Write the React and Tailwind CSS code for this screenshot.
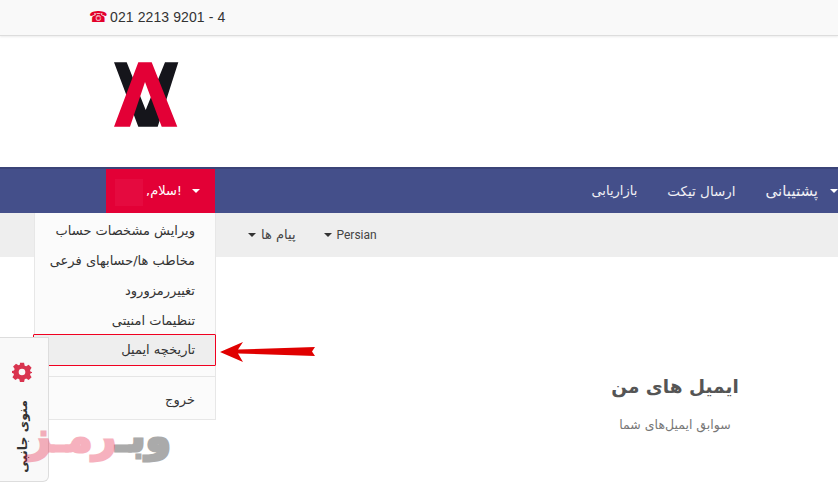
import React from "react";

const Caret = ({ className = "" }) => (
  <span className={"inline-block w-0 h-0 border-x-[4px] border-x-transparent border-t-[4px] " + className} />
);

const Item = ({ children, active }) => (
  <div className={active
    ? "h-[32px] -mt-[2px] -ml-[2px] -mr-[1px] pl-[21px] pr-[20px] flex items-center justify-end bg-[#eeeeee] border border-[#f00020] text-[#333] rounded-[1px] whitespace-nowrap"
    : "h-[30px] px-[20px] flex items-center justify-end text-[#333] whitespace-nowrap"}>
    <span dir="rtl">{children}</span>
  </div>
);

export default function App() {
  return (
    <div className="relative h-[484px] w-[838px] overflow-hidden bg-white text-[13px] font-['Roboto','DejaVu_Sans',sans-serif]">
      <header className="h-[36px] bg-[#f9f9f9] border-b border-[#dddddd] shadow-[0_1px_2px_rgba(0,0,0,0.08)] flex items-center pl-[89px] text-[14px] text-[#333]">
        <span className="text-[#e3002b] text-[15px] w-[21px] leading-none font-['DejaVu_Sans']">☎</span>
        <span className="font-['Liberation_Sans'] tracking-[0.1px]">021 2213 9201 - 4</span>
      </header>

      <div className="h-[131px] pl-[113px] pt-[26px]">
        <svg width="66" height="66" viewBox="0 0 66 66">
          <path d="M1 0.3H13.7L32.7 48L52 0.3H65.3L44.7 64.7H25.3Z" fill="#15151b" />
          <path d="M25.3 0.3H38.7L64.3 64.7H48.7L32 20L17 64.7H1Z" fill="#e30036" />
        </svg>
      </div>

      <nav className="h-[46px] bg-[#444f8a] border-t-2 border-[#3a4478] flex items-stretch text-white text-[13px] font-['DejaVu_Sans',sans-serif]">
        <div className="ml-[106px] w-[109px] bg-[#e30036] flex items-center pl-[9px]">
          <div className="w-[28px] h-[27px] bg-[#e50a3f] mt-[2px]" />
          <span dir="rtl" className="ml-[3px] text-[13px]">!سلام,</span>
          <Caret className="ml-[10px] border-t-white" />
        </div>
        <div className="ml-auto flex items-center text-[#f0f0f5]">
          <span className="mr-[30px]" dir="rtl">بازاریابی</span>
          <span className="mr-[30px] text-[13.5px]" dir="rtl">ارسال تیکت</span>
          <span className="mr-[12px] text-[15px]" dir="rtl">پشتیبانی</span>
          <Caret className="border-t-white" />
        </div>
      </nav>

      <div className="h-[44px] bg-[#eeeeee] flex items-center pl-[248px] text-[#444] text-[12px]">
        <Caret className="border-t-[#333] mr-[5px]" />
        <span dir="rtl" className="font-['DejaVu_Sans'] text-[13px]">پیام ها</span>
        <Caret className="ml-[28px] mr-[5px] border-t-[#333]" />
        <span className="font-['Roboto']">Persian</span>
      </div>

      <main className="flex justify-end pt-[117px]">
        <div className="w-[326px] flex flex-col items-center font-['DejaVu_Sans',sans-serif]" dir="rtl">
          <h1 className="text-[18.5px] font-bold text-[#555555] leading-[26px]">ایمیل های من</h1>
          <p className="mt-[16px] text-[12.5px] text-[#777777]">سوابق ایمیل‌های شما</p>
        </div>
      </main>

      <div className="absolute left-[34px] top-[213px] w-[182px] h-[207px] bg-[#fbfbfb] border border-t-0 border-[#e7e7e7] pt-[3px] font-['DejaVu_Sans',sans-serif] text-[13px]">
        <Item>ویرایش مشخصات حساب</Item>
        <Item>مخاطب ها/حسابهای فرعی</Item>
        <Item>تغییررمزورود</Item>
        <Item>تنظیمات امنیتی</Item>
        <Item active>تاریخچه ایمیل</Item>
        <div className="mt-[10px] mb-[8px] h-px bg-[#e5e5e5]" />
        <Item>خروج</Item>
      </div>

      <svg className="absolute left-[220px] top-[341px]" width="96" height="22" viewBox="0 0 96 22">
        <path d="M0 11L23 1L18 8.5L95 6L92 10.5L95 15L18 12.5L23 21Z" fill="#e00000" />
      </svg>

      <aside className="absolute left-0 top-[337px] w-[49px] h-[145px] bg-[#f9f9f9] border border-l-0 border-[#dddddd] rounded-br-[6px] flex flex-col items-center">
        <svg className="mt-[24px] ml-[-4px]" width="20" height="20" viewBox="0 0 24 24" fill="#d9344f">
          <path fillRule="evenodd" d="M9.5 1h5l.7 3.4 1.8.8 3-1.9 3.5 3.5-1.9 3 .8 1.8 3.4.7v.4l-3.4.7-.8 1.8 1.9 3-3.5 3.5-3-1.9-1.8.8-.7 3.4h-5l-.7-3.4-1.8-.8-3 1.9-3.5-3.5 1.9-3-.8-1.8L-1 13v-2l3.4-.7.8-1.8-1.9-3 3.5-3.5 3 1.9 1.8-.8ZM12 8a4 4 0 1 0 0 8 4 4 0 0 0 0-8Z" />
        </svg>
        <div className="mt-[14px] ml-[-2px] h-[80px] w-[20px] flex items-center justify-center">
          <span dir="rtl" className="-rotate-90 whitespace-nowrap font-bold text-[12.5px] text-[#333] font-['DejaVu_Sans']">منوی جانبی</span>
        </div>
      </aside>

      <div dir="rtl" className="absolute left-[16px] top-[410px] w-[155px] h-[54px] overflow-hidden flex justify-start items-start font-['DejaVu_Sans'] font-bold text-[41px] leading-[54px] whitespace-nowrap">
        <span className="text-[#aaaaaa] [-webkit-text-stroke:3px_#aaaaaa]">وبـ</span>
        <span className="text-[#e3002b] opacity-30 [-webkit-text-stroke:3px_#e3002b]">رمـز</span>
      </div>
    </div>
  );
}
